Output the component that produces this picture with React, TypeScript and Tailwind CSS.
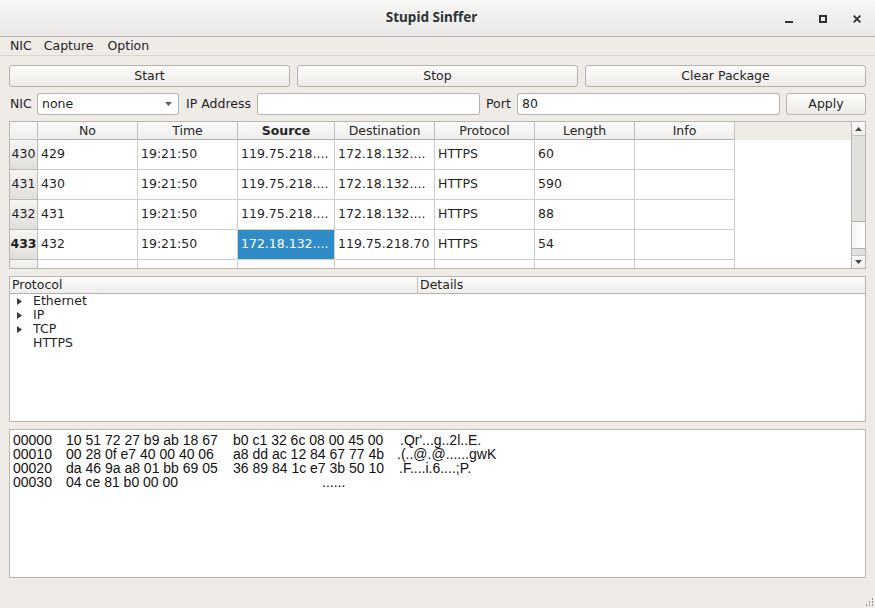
import React from "react";

const cols = [
  { name: "No", w: "w-[100px]", bold: false },
  { name: "Time", w: "w-[100px]", bold: false },
  { name: "Source", w: "w-[97px]", bold: true },
  { name: "Destination", w: "w-[100px]", bold: false },
  { name: "Protocol", w: "w-[100px]", bold: false },
  { name: "Length", w: "w-[100px]", bold: false },
  { name: "Info", w: "w-[100px]", bold: false },
];

type Row = { n: string; cells: string[]; current?: boolean };

const rows: Row[] = [
  { n: "430", cells: ["429", "19:21:50", "119.75.218....", "172.18.132....", "HTTPS", "60", ""] },
  { n: "431", cells: ["430", "19:21:50", "119.75.218....", "172.18.132....", "HTTPS", "590", ""] },
  { n: "432", cells: ["431", "19:21:50", "119.75.218....", "172.18.132....", "HTTPS", "88", ""] },
  { n: "433", cells: ["432", "19:21:50", "172.18.132....", "119.75.218.70", "HTTPS", "54", ""], current: true },
];

const hexLines = [
  { off: "00000", h1: "10 51 72 27 b9 ab 18 67", h2: "b0 c1 32 6c 08 00 45 00", w2: "w-[167px]", a: ".Qr'...g..2l..E." },
  { off: "00010", h1: "00 28 0f e7 40 00 40 06", h2: "a8 dd ac 12 84 67 77 4b", w2: "w-[164px]", a: ".(..@.@......gwK" },
  { off: "00020", h1: "da 46 9a a8 01 bb 69 05", h2: "36 89 84 1c e7 3b 50 10", w2: "w-[166px]", a: ".F....i.6....;P." },
  { off: "00030", h1: "04 ce 81 b0 00 00", h2: "", w2: "w-[89px]", a: "......" },
];

function Btn({ children, className = "" }: { children: React.ReactNode; className?: string }) {
  return (
    <div
      className={
        "h-[22px] flex items-center justify-center rounded-[3px] border border-[#b7b3ad] bg-gradient-to-b from-[#fcfcfb] to-[#edebe8] " +
        className
      }
    >
      {children}
    </div>
  );
}

function TriRight() {
  return (
    <svg width="5" height="7" viewBox="0 0 5 7" className="block">
      <path d="M0 0 L5 3.5 L0 7 Z" fill="#3a3a3a" />
    </svg>
  );
}

function TriDown({ color = "#555" }: { color?: string }) {
  return (
    <svg width="7" height="4" viewBox="0 0 7 4" className="block">
      <path d="M0 0 L7 0 L3.5 4 Z" fill={color} />
    </svg>
  );
}

function TriUp({ color = "#555" }: { color?: string }) {
  return (
    <svg width="7" height="4" viewBox="0 0 7 4" className="block">
      <path d="M0 4 L7 4 L3.5 0 Z" fill={color} />
    </svg>
  );
}

export default function App() {
  return (
    <div className="w-[875px] h-[608px] bg-[#efebe7] flex flex-col overflow-hidden rounded-t-[4px] text-[#1f1f1f] font-['DejaVu_Sans',sans-serif] text-[12.5px] leading-none">
      {/* Title bar */}
      <div className="h-[37px] shrink-0 border-b border-[#b4b2ae] bg-gradient-to-b from-[#f7f7f6] to-[#e9e8e6] flex items-center">
        <div className="flex-1" />
        <div className="font-['Noto_Sans',sans-serif] font-bold text-[13.5px] text-[#2e3436] pl-[2px]">Stupid Sinffer</div>
        <div className="flex-1 flex justify-end items-center pr-[14px] gap-[26px] pt-[1px]">
          <svg width="8" height="8" viewBox="0 0 8 8" className="block">
            <rect x="0" y="6" width="8" height="2" fill="#2e3436" />
          </svg>
          <svg width="8" height="8" viewBox="0 0 8 8" className="block">
            <rect x="1" y="1" width="6" height="6" fill="none" stroke="#2e3436" strokeWidth="2" />
          </svg>
          <svg width="8" height="8" viewBox="0 0 8 8" className="block">
            <path d="M0.7 0.7 L7.3 7.3 M7.3 0.7 L0.7 7.3" stroke="#2e3436" strokeWidth="1.9" />
          </svg>
        </div>
      </div>

      {/* Menu bar */}
      <div className="h-[19px] shrink-0 border-b border-[#d9d5cf] flex items-center pl-[10px]">
        <span>NIC</span>
        <span className="ml-[12px]">Capture</span>
        <span className="ml-[14px]">Option</span>
      </div>

      {/* Content */}
      <div className="flex flex-col px-[9px] pt-[9px]">
        <div className="grid grid-cols-3 gap-[7px]">
          <Btn>Start</Btn>
          <Btn>Stop</Btn>
          <Btn>Clear Package</Btn>
        </div>

        <div className="mt-[6px] h-[22px] flex items-center">
          <span className="w-[28px] pl-[1px]">NIC</span>
          <div className="w-[142px] h-[22px] rounded-[2px] border border-[#b7b3ad] bg-white flex items-center pl-[4px] pr-[6px]">
            <span className="flex-1">none</span>
            <TriDown color="#5c5c5c" />
          </div>
          <span className="w-[78px] pl-[7px]">IP Address</span>
          <div className="w-[223px] h-[22px] rounded-[2px] border border-[#b7b3ad] bg-white" />
          <span className="w-[37px] pl-[6px]">Port</span>
          <div className="w-[263px] h-[22px] rounded-[2px] border border-[#b7b3ad] bg-white flex items-center pl-[4px]">
            80
          </div>
          <Btn className="ml-[6px] w-[80px]">Apply</Btn>
        </div>

        {/* Packet table */}
        <div className="mt-[6px] h-[148px] border border-[#b9b6b2] bg-white flex overflow-hidden">
          <div className="flex-1 flex flex-col overflow-hidden">
            {/* header */}
            <div className="h-[18px] shrink-0 flex">
              <div className="w-[28px] h-[18px] border-r border-b border-[#c4c2be] bg-gradient-to-b from-[#fafaf9] to-[#efeeec]" />
              {cols.map((c) => (
                <div
                  key={c.name}
                  className={
                    c.w +
                    " h-[18px] pt-[1px] border-r border-b border-[#c4c2be] border-b-[#b3b1ad] bg-gradient-to-b from-[#fafaf9] to-[#efeeec] flex items-center justify-center text-[#262626] " +
                    (c.bold ? "font-bold" : "")
                  }
                >
                  {c.name}
                </div>
              ))}
              <div className="flex-1 h-[18px] bg-[#efece8]" />
            </div>
            {rows.map((r) => (
              <div key={r.n} className="h-[30px] shrink-0 flex">
                <div
                  className={
                    "w-[28px] h-[30px] border-r border-b border-[#bdbbb7] bg-gradient-to-b from-[#f6f5f4] to-[#e1dfdc] flex items-center justify-center whitespace-nowrap " +
                    (r.current ? "font-bold" : "")
                  }
                >
                  {r.n}
                </div>
                {cols.map((c, i) => {
                  const sel = r.current && i === 2;
                  return (
                    <div
                      key={c.name}
                      className={
                        c.w +
                        " h-[30px] border-r border-b border-[#cfcdca] flex items-center pl-[3px] whitespace-nowrap overflow-hidden " +
                        (sel ? "bg-[#308cc6] text-white border-[#2a7cb3]" : "")
                      }
                    >
                      {r.cells[i]}
                    </div>
                  );
                })}
                <div className="flex-1" />
              </div>
            ))}
            <div className="h-[8px] shrink-0 flex">
              <div className="w-[28px] h-[8px] border-r border-[#bdbbb7] bg-gradient-to-b from-[#f6f5f4] to-[#eeece9]" />
              {cols.map((c) => (
                <div key={c.name} className={c.w + " h-[8px] border-r border-[#cfcdca]"} />
              ))}
              <div className="flex-1" />
            </div>
          </div>
          {/* scrollbar */}
          <div className="w-[14px] shrink-0 border-l border-[#b9b6b2] flex flex-col">
            <div className="h-[14px] shrink-0 border-b border-[#c4c2be] bg-gradient-to-b from-[#fbfbfa] to-[#efeeec] flex items-center justify-center">
              <TriUp color="#4a4a4a" />
            </div>
            <div className="h-[85px] shrink-0 bg-[#e2e0dd]" />
            <div className="h-[28px] shrink-0 border-y border-[#b5b3af] bg-gradient-to-r from-[#f4f3f1] to-[#ffffff]" />
            <div className="h-[6px] shrink-0 bg-[#e2e0dd]" />
            <div className="flex-1 border-t border-[#c4c2be] bg-gradient-to-b from-[#fbfbfa] to-[#efeeec] flex items-center justify-center">
              <TriDown color="#4a4a4a" />
            </div>
          </div>
        </div>

        {/* Protocol tree */}
        <div className="mt-[7px] h-[146px] border border-[#b9b6b2] bg-white flex flex-col overflow-hidden">
          <div className="h-[17px] shrink-0 flex border-b border-[#b3b1ad] bg-gradient-to-b from-[#fafaf9] to-[#efeeec]">
            <div className="w-[408px] border-r border-[#c4c2be] flex items-center pl-[2px]">Protocol</div>
            <div className="flex-1 flex items-center pl-[2px]">Details</div>
          </div>
          {["Ethernet", "IP", "TCP", "HTTPS"].map((t, i) => (
            <div key={t} className="h-[14px] shrink-0 flex items-center">
              <div className="w-[23px] shrink-0 pl-[7px]">{i < 3 ? <TriRight /> : null}</div>
              <span>{t}</span>
            </div>
          ))}
        </div>

        {/* Hex dump */}
        <div className="mt-[7px] h-[149px] border border-[#b9b6b2] bg-white pt-[3px] pl-[3px] font-['Liberation_Sans',Arial,sans-serif] text-[14px] text-[#111]">
          {hexLines.map((l) => (
            <div key={l.off} className="h-[14px] leading-[14px] whitespace-pre flex">
              <span className="w-[53px] shrink-0">{l.off}</span>
              <span className="w-[167px] shrink-0">{l.h1}</span>
              <span className={l.w2 + " shrink-0"}>{l.h2}</span>
              <span>{l.a}</span>
            </div>
          ))}
        </div>
      </div>

      <div className="flex-1 flex justify-end items-end pr-[1px] pb-[1px]">
        <svg width="9" height="10" viewBox="0 0 9 10" className="block">
          {[
            [7, 1], [7, 4], [4, 4], [7, 7], [4, 7], [1, 7],
          ].map(([x, y], i) => (
            <rect key={i} x={x} y={y} width="1" height="2" fill="#9a968f" />
          ))}
        </svg>
      </div>
    </div>
  );
}
